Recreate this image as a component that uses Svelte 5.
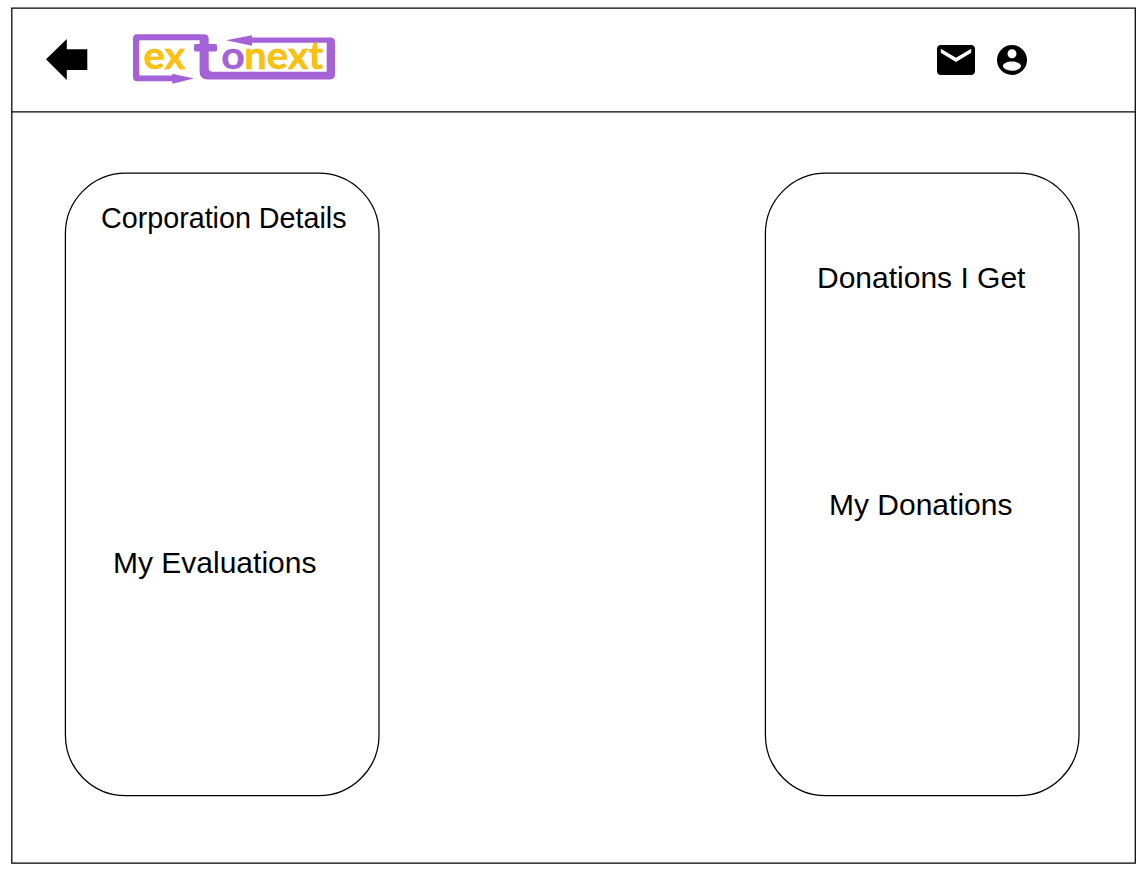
<script>
  const panels = [
    { side: 'left', items: [
      { text: 'Corporation Details', kind: 'corporation' },
      { text: 'My Evaluations', kind: 'evaluations' }
    ] },
    { side: 'right', items: [
      { text: 'Donations I Get', kind: 'received' },
      { text: 'My Donations', kind: 'donations' }
    ] }
  ];
</script>

<div class="page">
  <svg class="frame" width="1145" height="874" aria-hidden="true">
    <path d="M11.8 8.2H1135.3V863.1H11.8ZM11.8 111.8H1135.3" />
  </svg>
  <header>
    <svg class="back" width="42" height="42" viewBox="46 39 42 42" role="img" aria-label="Back">
      <path d="M46 59.3 66.8 39V49.2H87.3V70H66.8V80Z" />
    </svg>
    <svg class="logo" width="206" height="54" viewBox="131 32 206 54" role="img" aria-label="extonext">
      <g fill="#a562d8">
        <path fill-rule="evenodd" d="M137 34.2H204Q208.7 34.2 208.7 39V44H215.5Q217 44 217 45.5V49.8Q217 51.4 215.5 51.4H208.7V68Q208.7 71.8 212.5 71.8H326.7V42.8H252V45.7L226 40.3 252 35.3V37.5H330.5Q335 37.5 335 42V74.5Q335 79.4 330 79.4H207.5Q199.6 79.4 199.6 71.5V51.4H195.5Q194 51.4 194 49.8V45.5Q194 44 195.5 44H199.6V40.2H140.2Q139.2 40.2 139.2 41.2V74.5Q139.2 75.6 140.2 75.6H172.3V73.7L194 78.5 172.3 83.8V81.2H137Q133 81.2 133 77V38.5Q133 34.2 137 34.2Z" />
      </g>
      <text x="143.5" y="69.3" textLength="42" lengthAdjust="spacingAndGlyphs" class="gold">ex</text>
      <text x="221.3" y="69.3" textLength="23.5" lengthAdjust="spacingAndGlyphs" class="purple">o</text>
      <text x="244.3" y="69.3" textLength="79" lengthAdjust="spacingAndGlyphs" class="gold">next</text>
    </svg>
    <svg class="mail" width="38" height="30" viewBox="2 4 20 16" preserveAspectRatio="none" role="img" aria-label="Mail">
      <path d="M20 4H4c-1.1 0-2 .9-2 2v12c0 1.1.9 2 2 2h16c1.1 0 2-.9 2-2V6c0-1.1-.9-2-2-2zm0 4.1-8 5-8-5V6l8 4.8 8-4.8z" />
    </svg>
    <svg class="account" width="30" height="30" viewBox="2 2 20 20" role="img" aria-label="Account">
      <path d="M12 2a10 10 0 1 0 0 20 10 10 0 0 0 0-20zm0 2.8a3 3 0 1 1 0 6 3 3 0 0 1 0-6zm0 14.3c-3.3 0-6-1.5-6-3.1s2.7-3 6-3 6 1.4 6 3-2.7 3.1-6 3.1z" />
    </svg>
  </header>
  <main>
    {#each panels as panel}
      <section class={panel.side}>
        <svg class="frame" width="316" height="625" aria-hidden="true">
          <rect x="1.4" y="1.2" width="313.6" height="622.5" rx="60.5" />
        </svg>
        {#each panel.items as item}
          <div class="label {item.kind}">{item.text}</div>
        {/each}
      </section>
    {/each}
  </main>
</div>

<style>
  :global(body) { margin: 0; background: #fff; }
  .page { position: relative; width: 1145px; height: 874px; overflow: hidden; color: #000; font-family: "Liberation Sans", Arial, sans-serif; }
  .frame { position: absolute; inset: 0; fill: none; stroke: #000; stroke-width: 1.25; pointer-events: none; }
  svg { display: block; flex: none; }
  header { display: flex; align-items: flex-start; box-sizing: border-box; height: 112px; padding: 32px 118px 0 46px; }
  .back { margin-top: 7px; }
  .logo { margin-left: 43px; overflow: visible; }
  .mail { margin: 13px 22px 0 auto; }
  .account { margin-top: 13px; }
  .logo text { font-family: Lato, sans-serif; font-size: 39px; font-weight: 700; stroke-width: .4; }
  .gold { fill: #fcc30b; stroke: #eab013; }
  .purple { fill: #a562d8; stroke: #a562d8; }
  main { display: flex; justify-content: space-between; padding: 60px 65px 0 64px; }
  section { position: relative; width: 316px; height: 625px; }
  .label { height: 36px; line-height: 36px; font-size: 30px; white-space: nowrap; }
  .corporation { padding: 28px 0 0 37px; font-size: 28.7px; }
  .evaluations { padding: 309px 0 0 49px; }
  .received { padding: 88px 0 0 53px; }
  .donations { padding: 191px 0 0 65px; }
</style>
